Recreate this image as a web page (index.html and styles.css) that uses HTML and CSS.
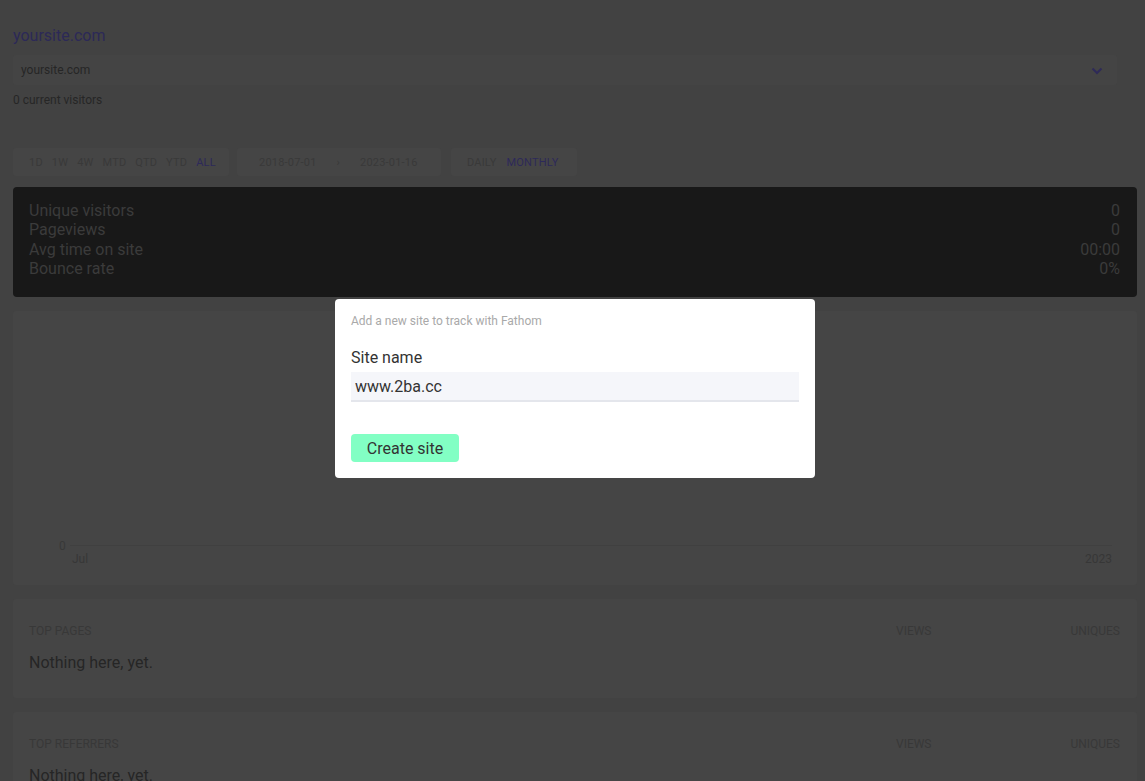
FILE: index.html
```html
<!DOCTYPE html>
<html>
<head>
  <meta charset="UTF-8">
  <title>Fathom</title>
  <link rel="stylesheet" href="styles.css">
</head>
<body>
  <div class="page">
    <div class="site-title">yoursite.com</div>
    <div class="site-select">
      <span>yoursite.com</span>
      <svg class="chevron" width="12" height="8" viewBox="0 0 12 8"><path d="M1.5 1.5 L6 6 L10.5 1.5" fill="none" stroke="#2e2a58" stroke-width="2"/></svg>
    </div>
    <div class="visitors">0 current visitors</div>

    <div class="filters">
      <div class="filter-group periods">
        <span>1D</span><span>1W</span><span>4W</span><span>MTD</span><span>QTD</span><span>YTD</span><span class="active">ALL</span>
      </div>
      <div class="filter-group dates">
        <span>2018-07-01</span><span class="arrow">›</span><span>2023-01-16</span>
      </div>
      <div class="filter-group grouping">
        <span>DAILY</span><span class="active">MONTHLY</span>
      </div>
    </div>

    <div class="totals">
      <div class="total-row"><span>Unique visitors</span><span>0</span></div>
      <div class="total-row"><span>Pageviews</span><span>0</span></div>
      <div class="total-row"><span>Avg time on site</span><span>00:00</span></div>
      <div class="total-row"><span>Bounce rate</span><span>0%</span></div>
    </div>

    <div class="card chart">
      <div class="chart-area">
        <div class="axis">
          <span class="y-label">0</span>
          <div class="axis-line"></div>
        </div>
        <div class="x-labels"><span>Jul</span><span>2023</span></div>
      </div>
    </div>

    <div class="card table">
      <div class="table-head">
        <span class="head-name">TOP PAGES</span>
        <span class="head-col">VIEWS</span>
        <span class="head-col">UNIQUES</span>
      </div>
      <div class="empty">Nothing here, yet.</div>
    </div>

    <div class="card table">
      <div class="table-head">
        <span class="head-name">TOP REFERRERS</span>
        <span class="head-col">VIEWS</span>
        <span class="head-col">UNIQUES</span>
      </div>
      <div class="empty">Nothing here, yet.</div>
    </div>
  </div>

  <div class="modal">
    <div class="modal-hint">Add a new site to track with Fathom</div>
    <label class="modal-label">Site name</label>
    <input class="modal-input" type="text" value="www.2ba.cc">
    <button class="modal-button">Create site</button>
  </div>
</body>
</html>
```

FILE: styles.css
```css
body {
  margin: 0;
  background-color: #424242;
  font-family: Roboto, "Open Sans", Arial, sans-serif;
  color: #2b2b2b;
  height: 781px;
  overflow: hidden;
}

.page {
  padding: 26px 8px 0 13px;
}

.site-title {
  font-size: 16px;
  color: #2c2957;
  line-height: 20px;
}

.site-select {
  display: flex;
  align-items: center;
  justify-content: space-between;
  height: 30px;
  margin: 9px 20px 0 0;
  padding: 0 14px 0 8px;
  background: #444444;
  border-radius: 3px;
  font-size: 12px;
  color: #262626;
}

.chevron {
  margin-top: 2px;
}

.visitors {
  font-size: 12px;
  color: #262626;
  margin-top: 7px;
  line-height: 16px;
}

.filters {
  display: flex;
  gap: 8px;
  margin-top: 40px;
}

.filter-group {
  display: flex;
  align-items: center;
  height: 28px;
  padding: 0 16px;
  gap: 9px;
  background: #454545;
  border-radius: 3px;
  font-size: 11px;
  color: #393939;
  letter-spacing: 0.2px;
}

.filter-group.periods {
  width: 184px;
}

.filter-group.dates {
  width: 160px;
  gap: 20px;
  padding: 0 22px;
}

.filter-group.grouping {
  width: 94px;
  gap: 10px;
  margin-left: 2px;
}

.filter-group .active {
  color: #2d2959;
}

.totals {
  margin-top: 11px;
  background: #181818;
  border-radius: 4px;
  padding: 14px 17px 18px 16px;
  font-size: 16px;
  color: #3b3b3b;
}

.total-row {
  display: flex;
  justify-content: space-between;
  line-height: 19.4px;
}

.card {
  background: #454545;
  border-radius: 3px;
  margin-top: 14px;
}

.chart {
  height: 274px;
  display: flex;
  align-items: flex-end;
}

.chart-area {
  width: 100%;
  padding: 0 25px 20px 46px;
}

.axis {
  display: flex;
  align-items: center;
  gap: 4px;
}

.y-label {
  font-size: 12px;
  color: #383838;
}

.axis-line {
  flex: 1;
  height: 1px;
  background: #404040;
}

.x-labels {
  display: flex;
  justify-content: space-between;
  padding-left: 13px;
  font-size: 12px;
  line-height: 12px;
  color: #373737;
}

.table {
  height: 99px;
  padding: 24px 17px 0 16px;
  box-sizing: border-box;
}

.table-head {
  display: flex;
  font-size: 12px;
  color: #383838;
  line-height: 16px;
}

.head-name {
  flex: 1;
}

.head-col:nth-child(2) {
  width: 34px;
  margin-right: 140px;
}

.head-col:nth-child(3) {
  width: 50px;
  text-align: right;
}

.empty {
  font-size: 16px;
  color: #262626;
  margin-top: 14px;
}

.modal {
  position: absolute;
  top: 299px;
  left: 335px;
  width: 480px;
  height: 179px;
  box-sizing: border-box;
  padding: 14px 16px 0 16px;
  background: #ffffff;
  border-radius: 4px;
  display: flex;
  flex-direction: column;
  align-items: flex-start;
}

.modal-hint {
  font-size: 12px;
  color: #a9a9a9;
  line-height: 16px;
}

.modal-label {
  font-size: 16px;
  color: #333333;
  margin-top: 19px;
  line-height: 20px;
}

.modal-input {
  width: 100%;
  height: 30px;
  box-sizing: border-box;
  margin-top: 4px;
  padding: 0 4px;
  border: none;
  border-bottom: 2px solid #e4e6ec;
  background: #f5f6fa;
  font-family: Roboto, "Open Sans", Arial, sans-serif;
  font-size: 16px;
  color: #333333;
  outline: none;
}

.modal-button {
  margin-top: 32px;
  height: 28px;
  width: 108px;
  border: none;
  border-radius: 4px;
  background: #82ffc4;
  font-family: Roboto, "Open Sans", Arial, sans-serif;
  font-size: 16px;
  color: #333333;
  cursor: pointer;
}
```
